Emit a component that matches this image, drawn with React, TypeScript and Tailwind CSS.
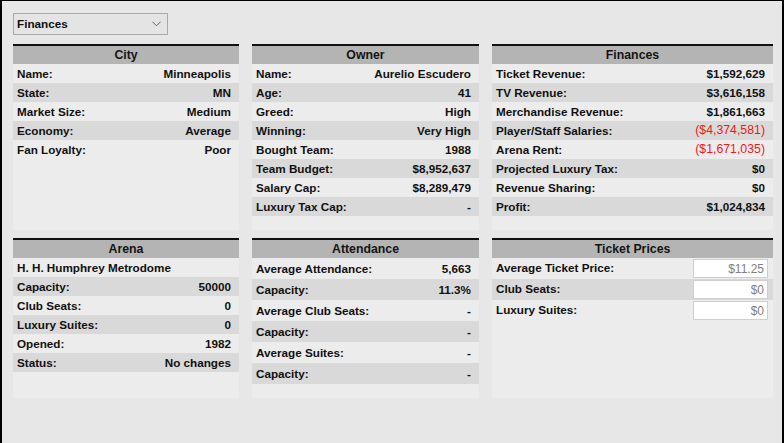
import React from "react";

type Row = { label: string; value?: string; red?: boolean };

const font = { fontFamily: '"Liberation Sans", Arial, sans-serif' };

function Header({ title }: { title: string }) {
  return (
    <div className="flex h-[20px] items-center justify-center border-t-2 border-[#111] bg-[#b4b4b4] text-[12.3px] font-bold leading-none text-[#151515]">
      {title}
    </div>
  );
}

function Panel({
  title,
  rows,
  rowH,
  height,
}: {
  title: string;
  rows: Row[];
  rowH: "19" | "21";
  height: "186" | "160";
}) {
  return (
    <div className={`flex flex-col bg-[#ececec] ${height === "186" ? "h-[186px]" : "h-[160px]"}`}>
      <Header title={title} />
      {rows.map((r, i) => (
        <div
          key={i}
          className={`flex items-center justify-between pl-1 pr-2 text-[11.7px] font-bold leading-none text-[#111] ${
            rowH === "19" ? "h-[19px]" : "h-[21px]"
          } ${i % 2 === 1 ? "bg-[#d9d9d9]" : ""}`}
        >
          <span>{r.label}</span>
          {r.value !== undefined && (
            <span className={r.red ? "text-[12.3px] font-normal text-[#f01818]" : ""}>{r.value}</span>
          )}
        </div>
      ))}
    </div>
  );
}

function TicketPanel() {
  const rows = [
    { label: "Average Ticket Price:", value: "$11.25" },
    { label: "Club Seats:", value: "$0" },
    { label: "Luxury Suites:", value: "$0" },
  ];
  return (
    <div className="flex h-[160px] flex-col bg-[#ececec]">
      <Header title="Ticket Prices" />
      {rows.map((r, i) => (
        <div
          key={i}
          className={`flex h-[21px] items-center justify-between pl-1 pr-[5px] text-[11.7px] font-bold leading-none text-[#111] ${
            i % 2 === 1 ? "bg-[#d9d9d9]" : ""
          }`}
        >
          <span className="-mt-[2px]">{r.label}</span>
          <div className="flex h-[19px] w-[75px] items-center justify-end border border-[#cfcfcf] bg-white pr-[3px] text-[12px] font-normal text-[#808080]">
            {r.value}
          </div>
        </div>
      ))}
    </div>
  );
}

export default function App() {
  const city: Row[] = [
    { label: "Name:", value: "Minneapolis" },
    { label: "State:", value: "MN" },
    { label: "Market Size:", value: "Medium" },
    { label: "Economy:", value: "Average" },
    { label: "Fan Loyalty:", value: "Poor" },
  ];
  const owner: Row[] = [
    { label: "Name:", value: "Aurelio Escudero" },
    { label: "Age:", value: "41" },
    { label: "Greed:", value: "High" },
    { label: "Winning:", value: "Very High" },
    { label: "Bought Team:", value: "1988" },
    { label: "Team Budget:", value: "$8,952,637" },
    { label: "Salary Cap:", value: "$8,289,479" },
    { label: "Luxury Tax Cap:", value: "-" },
  ];
  const finances: Row[] = [
    { label: "Ticket Revenue:", value: "$1,592,629" },
    { label: "TV Revenue:", value: "$3,616,158" },
    { label: "Merchandise Revenue:", value: "$1,861,663" },
    { label: "Player/Staff Salaries:", value: "($4,374,581)", red: true },
    { label: "Arena Rent:", value: "($1,671,035)", red: true },
    { label: "Projected Luxury Tax:", value: "$0" },
    { label: "Revenue Sharing:", value: "$0" },
    { label: "Profit:", value: "$1,024,834" },
  ];
  const arena: Row[] = [
    { label: "H. H. Humphrey Metrodome" },
    { label: "Capacity:", value: "50000" },
    { label: "Club Seats:", value: "0" },
    { label: "Luxury Suites:", value: "0" },
    { label: "Opened:", value: "1982" },
    { label: "Status:", value: "No changes" },
  ];
  const attendance: Row[] = [
    { label: "Average Attendance:", value: "5,663" },
    { label: "Capacity:", value: "11.3%" },
    { label: "Average Club Seats:", value: "-" },
    { label: "Capacity:", value: "-" },
    { label: "Average Suites:", value: "-" },
    { label: "Capacity:", value: "-" },
  ];

  return (
    <div
      style={font}
      className="box-border h-[443px] w-[784px] overflow-hidden border-t border-r-2 border-l-2 border-black bg-[#e7e7e7] pt-3 pr-[10px] pl-[11px]"
    >
      <div className="flex h-[22px] w-[155px] items-center justify-between border border-[#a9a9a9] bg-[#e4e4e4] pr-[6px] pl-[3px] text-[11.7px] font-bold text-[#111]">
        <span>Finances</span>
        <svg width="9" height="6" viewBox="0 0 9 6" fill="none">
          <path d="M0.5 0.8 L4.5 4.8 L8.5 0.8" stroke="#666" strokeWidth="1" />
        </svg>
      </div>
      <div className="mt-[9px] grid grid-cols-[226px_227px_281px] gap-x-[13px] gap-y-[8px]">
        <Panel title="City" rows={city} rowH="19" height="186" />
        <Panel title="Owner" rows={owner} rowH="19" height="186" />
        <Panel title="Finances" rows={finances} rowH="19" height="186" />
        <Panel title="Arena" rows={arena} rowH="19" height="160" />
        <Panel title="Attendance" rows={attendance} rowH="21" height="160" />
        <TicketPanel />
      </div>
    </div>
  );
}
